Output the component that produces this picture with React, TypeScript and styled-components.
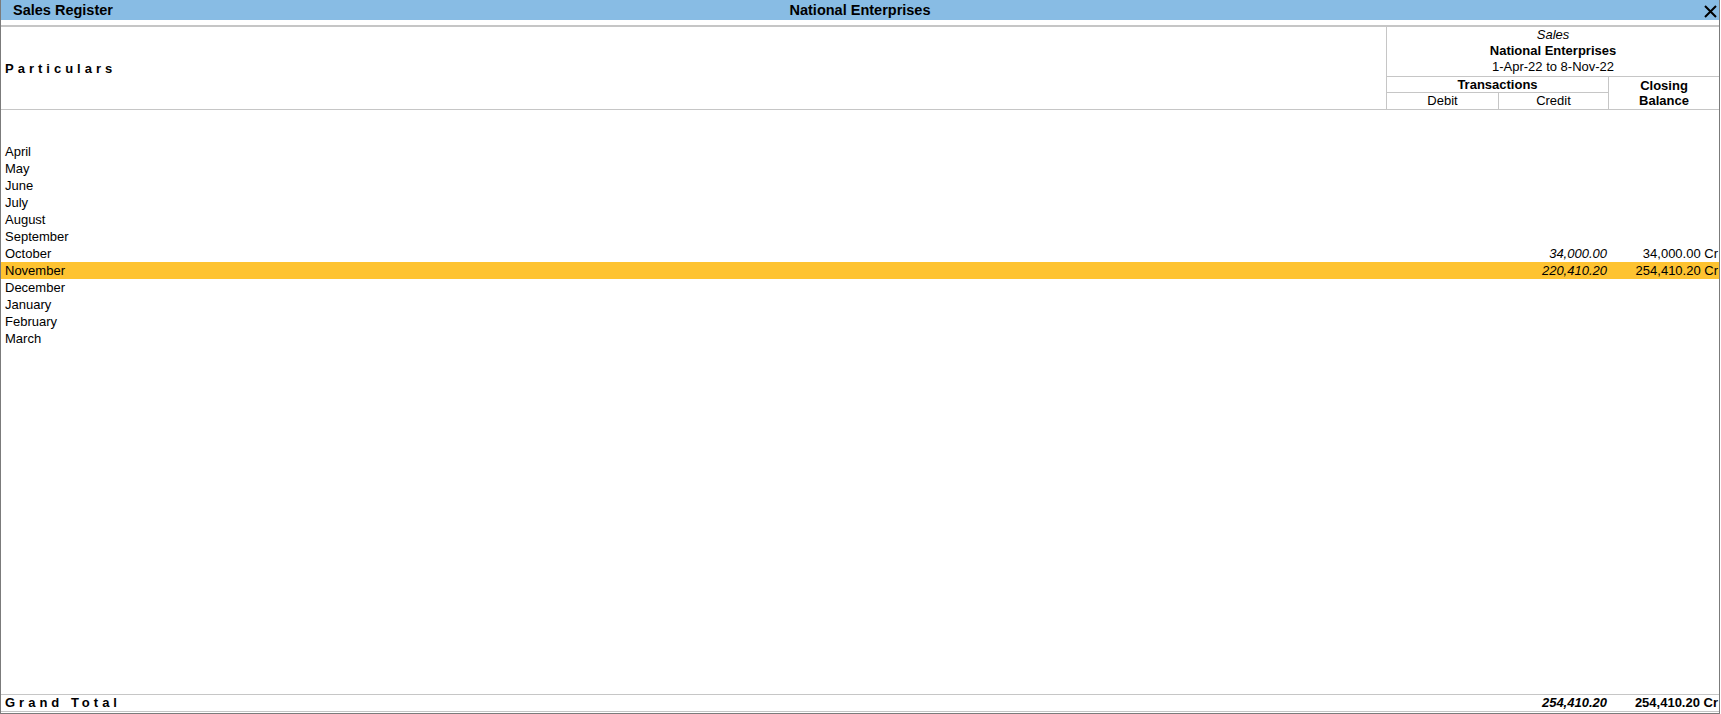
import React from "react";
import styled, { createGlobalStyle } from "styled-components";

const Global = createGlobalStyle`
  html, body { margin: 0; padding: 0; background: #fff; }
  * { box-sizing: border-box; }
`;

const LINE = "#c6c6c6";

const Window = styled.div`
  width: 1720px;
  height: 714px;
  border: 1px solid #7b7b7b;
  border-top: none;
  display: flex;
  flex-direction: column;
  background: #fff;
  color: #000;
  font-family: "Liberation Sans", Arial, sans-serif;
  font-size: 13px;
`;

const TitleBar = styled.div`
  height: 20px;
  flex: none;
  background: #88bce4;
  display: grid;
  grid-template-columns: 1fr auto 1fr;
  align-items: center;
  padding: 0 7px;
  font-weight: bold;
  font-size: 14.5px;
  margin-bottom: 5px;
`;

const TitleLeft = styled.div`
  justify-self: start;
  padding-left: 5px;
`;

const TitleCenter = styled.div`
  justify-self: center;
`;

const CloseBtn = styled.div`
  justify-self: end;
  display: flex;
  align-items: center;
  padding-top: 2px;
  margin-right: -5px;
`;

const Header = styled.div`
  flex: none;
  display: grid;
  grid-template-columns: 1fr 333px;
  border-top: 2px solid ${LINE};
  border-bottom: 1px solid ${LINE};
  height: 85px;
`;

const Spaced = styled.div`
  font-weight: bold;
  letter-spacing: 4px;
  padding-left: 4px;
  display: flex;
  align-items: center;
`;

const RightBox = styled.div`
  border-left: 1px solid ${LINE};
  display: grid;
  grid-template-columns: 111px 110px 111px;
  grid-template-rows: 50px 16px 16px;
`;

const TitleCell = styled.div`
  grid-column: 1 / 4;
  border-bottom: 1px solid ${LINE};
  text-align: center;
  line-height: 16px;
`;

const Line = styled.div<{ $italic?: boolean; $bold?: boolean }>`
  font-style: ${(p) => (p.$italic ? "italic" : "normal")};
  font-weight: ${(p) => (p.$bold ? "bold" : "normal")};
`;

const HeadCell = styled.div<{
  $col: string;
  $row: string;
  $left?: boolean;
  $bottom?: boolean;
  $bold?: boolean;
}>`
  grid-column: ${(p) => p.$col};
  grid-row: ${(p) => p.$row};
  border-left: ${(p) => (p.$left ? `1px solid ${LINE}` : "none")};
  border-bottom: ${(p) => (p.$bottom ? `1px solid ${LINE}` : "none")};
  font-weight: ${(p) => (p.$bold ? "bold" : "normal")};
  text-align: center;
  line-height: 15.5px;
  display: flex;
  flex-direction: column;
  justify-content: center;
`;

const Body = styled.div`
  flex: 1;
  padding-top: 33px;
  overflow: hidden;
`;

const Row = styled.div<{ $active?: boolean }>`
  display: grid;
  grid-template-columns: 1fr 112px 110px 111px;
  height: 17px;
  line-height: 17px;
  background: ${(p) => (p.$active ? "#fec331" : "transparent")};
`;

const Name = styled.div`
  padding-left: 4px;
  white-space: nowrap;
`;

const Amount = styled.div<{ $italic?: boolean; $bold?: boolean }>`
  text-align: right;
  padding-right: 1px;
  white-space: nowrap;
  font-style: ${(p) => (p.$italic ? "italic" : "normal")};
  font-weight: ${(p) => (p.$bold ? "bold" : "normal")};
`;

const Footer = styled.div`
  flex: none;
  display: grid;
  grid-template-columns: 1fr 112px 110px 111px;
  height: 18px;
  line-height: 16px;
  border-top: 1px solid ${LINE};
  border-bottom: 1px solid ${LINE};
  margin-bottom: 1px;
`;

const FooterLabel = styled.div`
  padding-left: 4px;
  font-weight: bold;
  letter-spacing: 4px;
  white-space: nowrap;
`;

type M = { name: string; credit?: string; closing?: string; active?: boolean };

const months: M[] = [
  { name: "April" },
  { name: "May" },
  { name: "June" },
  { name: "July" },
  { name: "August" },
  { name: "September" },
  { name: "October", credit: "34,000.00", closing: "34,000.00 Cr" },
  { name: "November", credit: "220,410.20", closing: "254,410.20 Cr", active: true },
  { name: "December" },
  { name: "January" },
  { name: "February" },
  { name: "March" },
];

export default function App() {
  return (
    <>
      <Global />
      <Window>
        <TitleBar>
          <TitleLeft>Sales Register</TitleLeft>
          <TitleCenter>National Enterprises</TitleCenter>
          <CloseBtn>
            <svg width="13" height="13" viewBox="0 0 13 13">
              <path d="M1 1 L12 12 M12 1 L1 12" stroke="#000" strokeWidth="2" fill="none" />
            </svg>
          </CloseBtn>
        </TitleBar>
        <Header>
          <Spaced>Particulars</Spaced>
          <RightBox>
            <TitleCell>
              <Line $italic>Sales</Line>
              <Line $bold>National Enterprises</Line>
              <Line>1-Apr-22 to 8-Nov-22</Line>
            </TitleCell>
            <HeadCell $col="1 / 3" $row="2" $bottom $bold>
              Transactions
            </HeadCell>
            <HeadCell $col="3" $row="2 / 4" $left $bold>
              <span>Closing</span>
              <span>Balance</span>
            </HeadCell>
            <HeadCell $col="1" $row="3">
              Debit
            </HeadCell>
            <HeadCell $col="2" $row="3" $left>
              Credit
            </HeadCell>
          </RightBox>
        </Header>
        <Body>
          {months.map((m) => (
            <Row key={m.name} $active={m.active}>
              <Name>{m.name}</Name>
              <Amount />
              <Amount $italic>{m.credit}</Amount>
              <Amount>{m.closing}</Amount>
            </Row>
          ))}
        </Body>
        <Footer>
          <FooterLabel>Grand Total</FooterLabel>
          <Amount />
          <Amount $italic $bold>
            254,410.20
          </Amount>
          <Amount $bold>254,410.20 Cr</Amount>
        </Footer>
      </Window>
    </>
  );
}
